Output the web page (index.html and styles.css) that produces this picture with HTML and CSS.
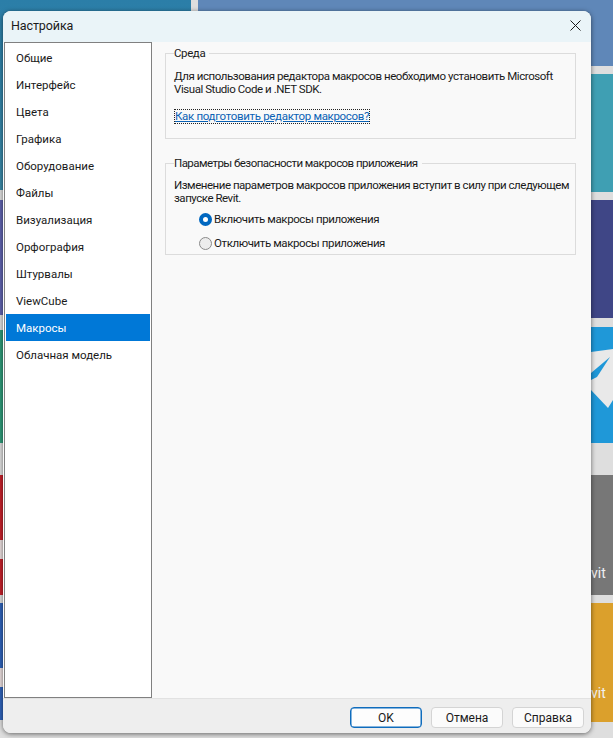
FILE: index.html
```html
<!DOCTYPE html>
<html lang="ru">
<head>
<meta charset="utf-8">
<title>Настройка</title>
<link rel="stylesheet" href="styles.css">
</head>
<body>
<div class="desktop">
  <div class="tile-col tile-col-left">
    <div class="tile t-teal-dark"></div>
    <div class="tile t-purple"></div>
    <div class="tile t-green"></div>
    <div class="tile t-red"><span class="tile-mark"></span></div>
    <div class="tile t-blue"><span class="tile-mark"></span></div>
  </div>
  <div class="tile-col tile-col-mid">
    <div class="tile t-steel"></div>
  </div>
  <div class="tile-col tile-col-right">
    <div class="tile t-steel-short"></div>
    <div class="tile t-teal"></div>
    <div class="tile t-indigo"></div>
    <div class="tile t-sky">
      <svg class="sky-art" width="22" height="116" viewBox="0 0 22 116" aria-hidden="true">
        <polygon points="0,25 22,22 22,73 17,81 0,63" fill="#e9e9e9"/>
        <polygon points="0,46 19,30 6,50 0,53" fill="#1f98d8"/>
      </svg>
    </div>
    <div class="tile t-gray"><span class="tile-name">vit</span></div>
    <div class="tile t-orange"><span class="tile-name">vit</span></div>
  </div>
</div>

<div class="dialog">
  <header class="titlebar">
    <span class="title">Настройка</span>
    <svg class="close" width="11" height="11" viewBox="0 0 11 11" aria-label="Закрыть">
      <path d="M.5.5l10 10M10.5.5l-10 10" stroke="#1a1a1a" stroke-width="1" fill="none"/>
    </svg>
  </header>
  <div class="body">
    <nav class="nav">
      <a class="nav-item">Общие</a>
      <a class="nav-item">Интерфейс</a>
      <a class="nav-item">Цвета</a>
      <a class="nav-item">Графика</a>
      <a class="nav-item">Оборудование</a>
      <a class="nav-item">Файлы</a>
      <a class="nav-item">Визуализация</a>
      <a class="nav-item">Орфография</a>
      <a class="nav-item">Штурвалы</a>
      <a class="nav-item">ViewCube</a>
      <a class="nav-item nav-item-active">Макросы</a>
      <a class="nav-item">Облачная модель</a>
    </nav>
    <main class="content">
      <fieldset class="group group-env">
        <legend class="legend">Среда</legend>
        <p class="text text-env">Для использования редактора макросов необходимо установить Microsoft<br>Visual Studio Code и .NET SDK.</p>
        <a class="link">Как подготовить редактор макросов?</a>
      </fieldset>
      <fieldset class="group group-sec">
        <legend class="legend legend-long">Параметры безопасности макросов приложения</legend>
        <p class="text text-sec">Изменение параметров макросов приложения вступит в силу при следующем<br>запуске Revit.</p>
        <div class="radios">
          <label class="radio"><span class="dot dot-on"></span>Включить макросы приложения</label>
          <label class="radio"><span class="dot"></span>Отключить макросы приложения</label>
        </div>
      </fieldset>
    </main>
  </div>
  <footer class="footer">
    <button class="btn btn-default">OK</button>
    <button class="btn">Отмена</button>
    <button class="btn">Справка</button>
  </footer>
</div>
</body>
</html>
```
FILE: styles.css
```css
* { box-sizing: border-box; }
html, body { margin: 0; height: 100%; }
body {
  width: 613px;
  height: 738px;
  overflow: hidden;
  position: relative;
  background: #dedede;
  font-family: Roboto, "Open Sans", sans-serif;
  font-size: 11.5px;
  color: #1a1a1a;
}

/* Desktop tiles behind the dialog */
.desktop {
  position: absolute;
  inset: 0;
  display: flex;
  justify-content: space-between;
}
.tile-col { display: flex; flex-direction: column; }
.tile-col-left { width: 191px; }
.tile-col-mid { width: 393px; margin-left: 7px; }
.tile-col-right { width: 22px; }
.tile { flex: none; position: relative; overflow: hidden; }
.t-teal-dark { height: 190px; margin-bottom: 10px; background: linear-gradient(#2b7ea8, #3a88a6); }
.t-purple { height: 115px; margin-bottom: 15px; background: #5f63ad; }
.t-green { height: 113px; margin-bottom: 32px; background: #2f9a78; }
.t-red { height: 120px; margin-bottom: 8px; background: #c4202a; }
.t-blue { height: 117px; background: #2f62b8; }
.tile-mark { position: absolute; left: 0; top: 65px; width: 3px; height: 19px; background: #e8dcdc; }
.t-steel { height: 40px; background: #5f87b8; }
.t-steel-short { height: 66px; margin-bottom: 8px; background: #5f87b8; }
.t-teal { height: 118px; margin-bottom: 8px; background: #3f9fb3; }
.t-indigo { height: 118px; margin-bottom: 9px; background: #3f4686; }
.t-sky { height: 116px; margin-bottom: 32px; background: #1f98d8; }
.t-gray { height: 120px; margin-bottom: 8px; background: #777777; }
.t-orange { height: 119px; background: #dba02c; }
.sky-art { display: block; }
.tile-name {
  position: absolute;
  left: 0;
  top: 90px;
  color: #f0f0f0;
  font-size: 14px;
  line-height: 16px;
}
.t-orange .tile-name { top: 82px; }

/* Dialog window */
.dialog {
  position: absolute;
  left: 3px;
  top: 11px;
  width: 588px;
  height: 722px;
  display: flex;
  flex-direction: column;
  border-radius: 8px;
  overflow: hidden;
  background: #f9f9f9;
  box-shadow: 0 1px 5px rgba(0, 0, 0, 0.55);
}
.titlebar {
  height: 31px;
  flex: none;
  display: flex;
  align-items: center;
  justify-content: space-between;
  padding: 0 10px 2px 8px;
  background: #eaf4f8;
}
.title { font-size: 12.5px; letter-spacing: -0.1px; }
.close { display: block; }

.body { flex: 1; display: flex; min-height: 0; }
.nav {
  width: 148px;
  flex: none;
  margin-left: 1px;
  padding: 1px 1px 0;
  display: flex;
  flex-direction: column;
  background: #fff;
  border: 1px solid #808080;
}
.nav-item {
  height: 27px;
  flex: none;
  display: flex;
  align-items: center;
  padding-left: 10px;
}
.nav-item-active { background: #0078d7; color: #fff; }

.content {
  flex: 1;
  min-width: 0;
  padding: 3px 15px 0 13px;
  display: flex;
  flex-direction: column;
  align-items: stretch;
  letter-spacing: -0.4px;
}
.group {
  margin: 0;
  padding: 0 2px 0 9px;
  border: 1px solid #dcdcdc;
  min-width: 0;
}
.group-env { height: 94px; }
.group-sec { height: 100px; margin-top: 16px; }
.legend { padding: 0 4px 0 0; margin-left: -1px; line-height: 16px; }
.legend-long { letter-spacing: -0.55px; }
.text { margin: 9px 0 0 -1px; line-height: 13px; white-space: nowrap; }
.text-env { letter-spacing: -0.44px; }
.text-sec { margin-top: 8px; letter-spacing: -0.47px; }
.link {
  display: inline-block;
  margin: 14px 0 0 0;
  line-height: 13px;
  letter-spacing: -0.32px;
  color: #0b62b5;
  text-decoration: underline;
  outline: 1px dotted #222;
}
.radios { margin-top: 7px; padding-left: 24px; display: flex; flex-direction: column; gap: 10px; }
.radio { display: flex; align-items: center; gap: 2px; line-height: 14px; }
.dot {
  width: 13px;
  height: 13px;
  border-radius: 50%;
  flex: none;
  border: 1px solid #8a8a8a;
  background: #ececec;
}
.dot-on { border: 4px solid #0067c0; background: #fff; }

.footer {
  height: 35px;
  flex: none;
  display: flex;
  justify-content: flex-end;
  align-items: flex-start;
  gap: 9px;
  padding: 8px 7px 0 0;
  background: #eeeeee;
  border-top: 1px solid #e2e2e2;
}
.btn {
  width: 72px;
  height: 21px;
  padding: 0;
  font: inherit;
  font-size: 12px;
  color: #1a1a1a;
  background: #fbfbfb;
  border: 1px solid #d4d4d4;
  border-radius: 4px;
}
.btn-default { border: 1px solid #0f6cbd; background: #fdfdfd; box-shadow: inset 0 0 0 0.5px #0f6cbd; }
```
